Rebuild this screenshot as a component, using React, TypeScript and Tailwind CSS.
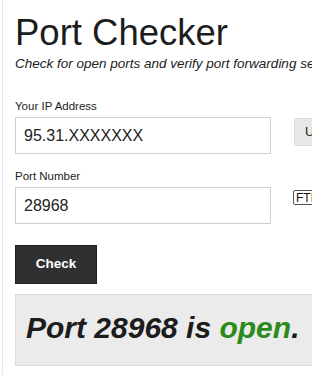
import React from "react";

export default function App() {
  return (
    <div className="w-[312px] h-[375px] overflow-hidden bg-white" style={{ fontFamily: '"Liberation Sans", Arial, sans-serif' }}>
      <div className="ml-[2px] w-[420px] h-[375px] border-l border-[#e6e6e6] pl-[12px] pt-[13px]">
        <h1 className="text-[36.5px] leading-[40px] text-[#1c1c1c] font-normal">Port Checker</h1>
        <p className="mt-[1px] text-[13.5px] leading-[20px] italic text-[#222] whitespace-nowrap">
          Check for open ports and verify port forwarding setup on your router.
        </p>

        <div className="mt-[25px] flex items-start gap-[23px]">
          <div className="w-[256px]">
            <div className="text-[11.5px] leading-[14px] text-[#222]">Your IP Address</div>
            <div className="mt-[4px] h-[37px] border border-[#cfcfcf] flex items-center pl-[8px] text-[16px] text-[#222]">
              95.31.XXXXXXX
            </div>
          </div>
          <div className="mt-[19px] h-[28px] w-[60px] bg-[#e8e8e8] border border-[#dcdcdc] rounded-[2px] flex items-center pl-[10px] text-[13px] text-[#222]">
            Use
          </div>
        </div>

        <div className="mt-[15px] flex items-start gap-[22px]">
          <div className="w-[256px]">
            <div className="text-[11.5px] leading-[14px] text-[#222]">Port Number</div>
            <div className="mt-[4px] h-[37px] border border-[#cfcfcf] flex items-center pl-[8px] text-[16px] text-[#222]">
              28968
            </div>
          </div>
          <div className="mt-[21px] h-[15px] w-[60px] border border-[#555] rounded-[2px] flex items-center pl-[2px] text-[12px] leading-[12px] text-[#111]">
            FTP
          </div>
        </div>

        <button className="mt-[21px] w-[82px] h-[39px] bg-[#303030] border border-[#1f1f1f] text-white font-bold text-[13.5px] flex items-center justify-center">
          Check
        </button>

        <div className="mt-[10px] w-[400px] h-[72px] bg-[#ebebeb] border border-[#dcdcdc] pl-[10px] pt-[15px]">
          <div className="text-[30px] leading-[36px] font-bold italic text-[#1c1c1c] whitespace-nowrap">
            Port 28968 is <span className="text-[#2b8a1c]">open</span>.
          </div>
        </div>
      </div>
    </div>
  );
}
